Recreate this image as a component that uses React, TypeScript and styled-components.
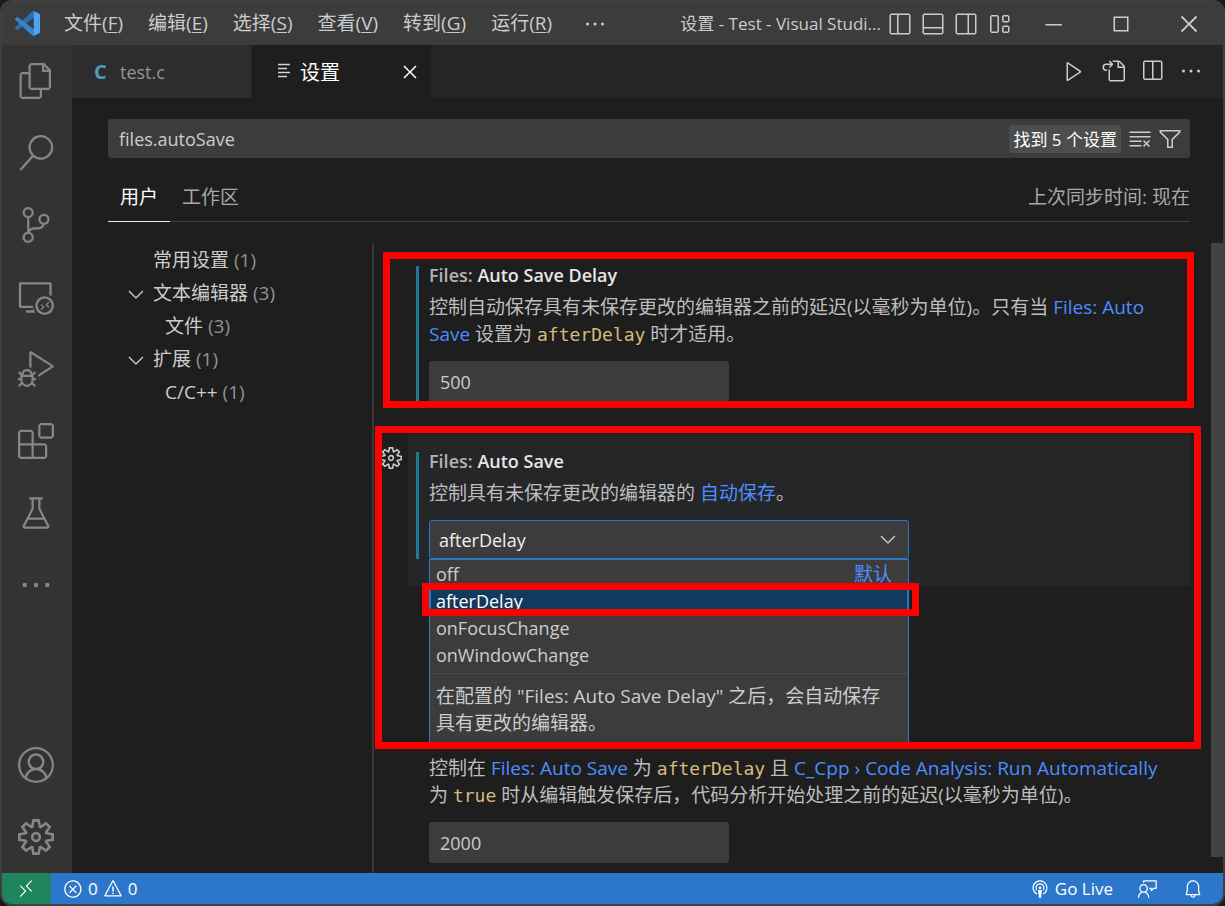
import React from 'react';
import styled, { createGlobalStyle } from 'styled-components';
import {
  VscAccount,
  VscBeaker,
  VscBell,
  VscBroadcast,
  VscChevronDown,
  VscChromeClose,
  VscChromeMaximize,
  VscChromeMinimize,
  VscClearAll,
  VscClose,
  VscDebugAlt,
  VscEllipsis,
  VscError,
  VscExtensions,
  VscFeedback,
  VscFiles,
  VscFilter,
  VscGoToFile,
  VscLayout,
  VscLayoutPanelOff,
  VscLayoutSidebarLeftOff,
  VscLayoutSidebarRightOff,
  VscPlay,
  VscRemote,
  VscRemoteExplorer,
  VscSearch,
  VscSettingsGear,
  VscSourceControl,
  VscSplitHorizontal,
  VscWarning,
} from 'react-icons/vsc';

const GlobalStyle = createGlobalStyle`
  *, *::before, *::after { box-sizing: border-box; }
  body {
    margin: 0;
    background: #1a1a1a;
    color: #cccccc;
    font-family: "Open Sans", "Noto Sans CJK SC", sans-serif;
    font-size: 19px;
    line-height: 27px;
  }
  button, input, select { font: inherit; color: inherit; border: 0; margin: 0; padding: 0; }
  button { background: none; display: flex; align-items: center; justify-content: center; }
  a { color: #4d8dff; text-decoration: none; }
  svg { flex: none; display: block; }
`;

const Window = styled.div`
  height: 100vh;
  min-height: 640px;
  display: flex;
  flex-direction: column;
  border: 2px solid #3f3f3f;
  border-radius: 12px;
  overflow: hidden;
  background: #1e1e1e;
`;

const TitleBar = styled.header`
  display: flex;
  align-items: center;
  height: 43px;
  flex: none;
  padding-left: 13px;
  background: #3c3c3c;
`;

const MenuBar = styled.nav`
  display: flex;
  align-items: center;
  gap: 1px;
  margin-left: 12px;
`;

const MenuButton = styled.button`
  height: 43px;
  padding: 0 12px;
  white-space: nowrap;
  u { text-underline-offset: 2px; }
`;

const WindowTitle = styled.div`
  flex: 1;
  min-width: 0;
  text-align: right;
  font-size: 17px;
  white-space: nowrap;
  overflow: hidden;
  text-overflow: ellipsis;
`;

const LayoutControls = styled.div`
  display: flex;
  gap: 9px;
  padding: 0 8px 0 7px;
`;

const IconButton = styled.button<{ $size?: number }>`
  width: ${(p) => p.$size ?? 24}px;
  height: ${(p) => p.$size ?? 24}px;
  flex: none;
`;

const WindowButton = styled.button`
  width: 68px;
  height: 43px;
`;

const Workbench = styled.div`
  flex: 1;
  min-height: 0;
  display: flex;
`;

const ActivityBar = styled.nav`
  width: 70px;
  flex: none;
  display: flex;
  flex-direction: column;
  justify-content: space-between;
  background: #333333;
  color: #868686;
`;

const ActivityButton = styled.button`
  width: 68px;
  height: 72px;
`;

const Main = styled.main`
  flex: 1;
  min-width: 0;
  display: flex;
  flex-direction: column;
`;

const TabStrip = styled.div`
  display: flex;
  height: 53px;
  flex: none;
  background: #252526;
`;

const Tab = styled.div<{ $active?: boolean }>`
  display: flex;
  align-items: center;
  width: 180px;
  padding: 0 9px 0 22px;
  border-right: 1px solid #252526;
  background: ${(p) => (p.$active ? '#1e1e1e' : '#2d2d2d')};
  color: ${(p) => (p.$active ? '#ffffff' : '#949494')};
  font-size: ${(p) => (p.$active ? 20 : 18)}px;
`;

const LanguageMark = styled.span`
  width: 26px;
  color: #519aba;
  font-weight: 700;
  font-size: 20px;
`;

const TabLabel = styled.span`
  flex: 1;
  padding-top: 1px;
`;

const SettingsMark = styled.svg`
  margin: 0 8px 3px 2px;
  width: 16px;
  height: 16px;
`;

const EditorActions = styled.div`
  margin-left: auto;
  display: flex;
  align-items: center;
  gap: 15px;
  padding: 0 20px 2px 0;
`;

const SettingsEditor = styled.section`
  flex: 1;
  min-height: 0;
  display: flex;
  flex-direction: column;
  padding: 21px 0 0 36px;
`;

const SearchBox = styled.div`
  display: flex;
  align-items: center;
  height: 39px;
  flex: none;
  margin-right: 33px;
  padding-right: 8px;
  border-radius: 3px;
  background: #3c3c3c;
`;

const SearchInput = styled.input`
  flex: 1;
  min-width: 0;
  padding: 0 11px;
  height: 39px;
  background: none;
  font-size: 18px;
`;

const ResultBadge = styled.span`
  padding: 0 4px;
  margin-right: 7px;
  height: 28px;
  line-height: 29px;
  border-radius: 3px;
  background: #4d4d4d;
  color: #ffffff;
  font-size: 17px;
`;

const SearchActions = styled.div`
  display: flex;
  gap: 6px;
`;

const ScopeBar = styled.div`
  display: flex;
  align-items: stretch;
  height: 49px;
  flex: none;
  margin: 15px 33px 0 0;
  border-bottom: 1px solid #404040;
`;

const ScopeTab = styled.button<{ $active?: boolean }>`
  height: 49px;
  padding: 0 12px;
  color: ${(p) => (p.$active ? '#ffffff' : '#a8a8a8')};
  border-bottom: 1px solid ${(p) => (p.$active ? '#e7e7e7' : 'transparent')};
`;

const SyncTime = styled.span`
  margin-left: auto;
  align-self: center;
  color: #a8a8a8;
`;

const SettingsBody = styled.div`
  flex: 1;
  min-height: 0;
  display: flex;
  margin-top: 21px;
`;

const Toc = styled.ul`
  width: 266px;
  flex: none;
  margin: 0;
  padding: 1px 0 0;
  list-style: none;
  border-right: 2px solid #383838;
`;

const TocRow = styled.li<{ $level?: number }>`
  display: flex;
  align-items: center;
  height: 33px;
  padding-left: ${(p) => (p.$level === 2 ? 28 : 16)}px;
  color: #cccccc;
  white-space: pre;
`;

const TocTwistie = styled.span`
  width: 29px;
  flex: none;
`;

const TocCount = styled.span`
  color: #929292;
`;

const SettingsList = styled.div`
  flex: 1;
  min-width: 0;
  overflow: hidden;
  display: flex;
  flex-direction: column;
  gap: 5px;
  padding: 5px 21px 0 34px;
`;

const ScrollTrack = styled.div`
  width: 12px;
  flex: none;
  padding-bottom: 16px;
`;

const ScrollThumb = styled.div`
  height: 100%;
  background: #434343;
`;

const SettingItem = styled.article<{ $focused?: boolean }>`
  position: relative;
  flex: none;
  padding: 18px 8px 27px;
  background: ${(p) => (p.$focused ? '#252628' : 'transparent')};
`;

const SettingContents = styled.div<{ $modified?: boolean }>`
  border-left: 3px solid ${(p) => (p.$modified ? '#217a94' : 'transparent')};
  padding-left: 10px;
`;

const SettingTitle = styled.h3`
  margin: 0 0 10px;
  font-size: 18px;
  line-height: 18px;
  font-weight: 600;
  color: #e7e7e7;
`;

const Category = styled.span`
  color: #b4b4b4;
`;

const Description = styled.p`
  margin: 0 0 13px;
  white-space: nowrap;
  color: #bdbdbd;
  code {
    color: #d7ba7d;
    font-family: "DejaVu Sans Mono", monospace;
    font-size: 18px;
    line-height: 18px;
  }
`;

const SettingInput = styled.input`
  display: block;
  width: 300px;
  height: 41px;
  padding: 1px 11px 0;
  border-radius: 3px;
  background: #3c3c3c;
  color: #cccccc;
  font-size: 18px;
`;

const CoveredSetting = styled(SettingItem)`
  margin-top: 146px;
`;

const GearButton = styled(IconButton)`
  position: absolute;
  left: -29px;
  top: 12px;
`;

const SelectBox = styled.div`
  position: relative;
  width: 480px;
`;

const Select = styled.select`
  appearance: none;
  display: block;
  width: 100%;
  height: 39px;
  padding: 1px 10px 0 9px;
  border: 1px solid #2c77cb;
  border-radius: 3px;
  background: #3c3c3c;
  color: #f0f0f0;
  font-size: 18px;
`;

const SelectChevron = styled.span`
  position: absolute;
  right: 9px;
  top: 7px;
  pointer-events: none;
`;

const OptionPanel = styled.div`
  position: absolute;
  top: 39px;
  left: 0;
  right: 0;
  border: 1px solid #2c77cb;
  background: #3c3c3c;
`;

const OptionList = styled.ul`
  margin: 0;
  padding: 0 0 5px;
  list-style: none;
`;

const Option = styled.li<{ $selected?: boolean }>`
  display: flex;
  justify-content: space-between;
  height: 27px;
  padding: 0 15px 0 5px;
  border: 1px solid ${(p) => (p.$selected ? '#2c77cb' : 'transparent')};
  background: ${(p) => (p.$selected ? '#12395e' : 'transparent')};
  color: ${(p) => (p.$selected ? '#ffffff' : '#cccccc')};
  font-size: 18px;
`;

const DefaultTag = styled.span`
  color: #4d8dff;
  font-size: 19px;
`;

const OptionDetail = styled.p`
  margin: 0;
  padding: 9px 6px 6px;
  border-top: 1px solid #4a4a4a;
  color: #cccccc;
  white-space: nowrap;
`;

const Highlight = styled.div<{ $top: number; $left: number; $right: number; $height: number }>`
  position: absolute;
  z-index: 2;
  top: ${(p) => p.$top}px;
  left: ${(p) => p.$left}px;
  right: ${(p) => p.$right}px;
  height: ${(p) => p.$height}px;
  border: 7px solid #ff0000;
  pointer-events: none;
`;

const StatusBar = styled.footer`
  display: flex;
  align-items: center;
  height: 31px;
  flex: none;
  background: #2c77cb;
  color: #ffffff;
  font-size: 17px;
`;

const RemoteButton = styled.button`
  width: 49px;
  height: 31px;
  padding-right: 2px;
  background: #1f855d;
`;

const StatusButton = styled.button`
  height: 31px;
  gap: 5px;
  padding: 0 12px;
`;

const StatusRight = styled.div`
  display: flex;
  gap: 1px;
  margin-left: auto;
  padding-right: 8px;
`;

const Logo = () => (
  <svg width="25" height="25" viewBox="0 0 100 100" aria-label="Visual Studio Code">
    <path
      fill="#2a6fb0"
      d="M96.46 10.8 75.86.88A6.23 6.23 0 0 0 68.75 2.08L1.3 63.58a4.17 4.17 0 0 0 0 6.17l5.51 5a4.17 4.17 0 0 0 5.32.24L93.36 13.37A4.14 4.14 0 0 1 100 16.67v-.24a6.25 6.25 0 0 0-3.54-5.63Z"
    />
    <path
      fill="#3484cf"
      d="m96.46 89.2-20.6 9.92a6.23 6.23 0 0 1-7.11-1.2L1.3 36.42a4.17 4.17 0 0 1 0-6.17l5.51-5a4.17 4.17 0 0 1 5.32-.24l81.23 61.62A4.14 4.14 0 0 0 100 83.33v.24a6.25 6.25 0 0 1-3.54 5.63Z"
    />
    <path
      fill="#4ba5f2"
      d="M75.86 99.13a6.23 6.23 0 0 1-7.11-1.21c2.3 2.3 6.25.67 6.25-2.59V4.67c0-3.26-3.94-4.9-6.25-2.59A6.23 6.23 0 0 1 75.86.87l20.6 9.91A6.25 6.25 0 0 1 100 16.41v67.18c0 2.4-1.38 4.59-3.54 5.63l-20.6 9.91Z"
    />
  </svg>
);

const menus: [string, string][] = [
  ['文件', 'F'],
  ['编辑', 'E'],
  ['选择', 'S'],
  ['查看', 'V'],
  ['转到', 'G'],
  ['运行', 'R'],
];

const activities = [
  { label: '资源管理器', Icon: VscFiles },
  { label: '搜索', Icon: VscSearch },
  { label: '源代码管理', Icon: VscSourceControl },
  { label: '远程资源管理器', Icon: VscRemoteExplorer },
  { label: '运行和调试', Icon: VscDebugAlt },
  { label: '扩展', Icon: VscExtensions },
  { label: '测试', Icon: VscBeaker },
  { label: '其他视图', Icon: VscEllipsis },
];

const toc = [
  { label: '常用设置', count: 1, level: 1, open: false },
  { label: '文本编辑器', count: 3, level: 1, open: true },
  { label: '文件', count: 3, level: 2, open: false },
  { label: '扩展', count: 1, level: 1, open: true },
  { label: 'C/C++', count: 1, level: 2, open: false },
];

const options = ['off', 'afterDelay', 'onFocusChange', 'onWindowChange'];

export default function App() {
  return (
    <>
      <GlobalStyle />
      <Window>
        <TitleBar>
          <Logo />
          <MenuBar>
            {menus.map(([label, key]) => (
              <MenuButton key={key}>
                <span>
                  {label}(<u>{key}</u>)
                </span>
              </MenuButton>
            ))}
            <IconButton aria-label="更多菜单" $size={60}>
              <VscEllipsis size={24} />
            </IconButton>
          </MenuBar>
          <WindowTitle>设置 - Test - Visual Studi...</WindowTitle>
          <LayoutControls>
            <IconButton aria-label="切换主侧栏"><VscLayoutSidebarLeftOff size={24} /></IconButton>
            <IconButton aria-label="切换面板"><VscLayoutPanelOff size={24} /></IconButton>
            <IconButton aria-label="切换辅助侧栏"><VscLayoutSidebarRightOff size={24} /></IconButton>
            <IconButton aria-label="自定义布局"><VscLayout size={24} /></IconButton>
          </LayoutControls>
          <WindowButton aria-label="最小化"><VscChromeMinimize size={24} /></WindowButton>
          <WindowButton aria-label="最大化"><VscChromeMaximize size={24} /></WindowButton>
          <WindowButton aria-label="关闭"><VscChromeClose size={24} /></WindowButton>
        </TitleBar>

        <Workbench>
          <ActivityBar>
            <div>
              {activities.map(({ label, Icon }) => (
                <ActivityButton key={label} aria-label={label}>
                  <Icon size={36} />
                </ActivityButton>
              ))}
            </div>
            <div>
              <ActivityButton aria-label="帐户"><VscAccount size={36} /></ActivityButton>
              <ActivityButton aria-label="管理"><VscSettingsGear size={36} /></ActivityButton>
            </div>
          </ActivityBar>

          <Main>
            <TabStrip>
              <Tab>
                <LanguageMark>C</LanguageMark>
                <TabLabel>test.c</TabLabel>
              </Tab>
              <Tab $active>
                <SettingsMark viewBox="0 0 16 16" fill="none" stroke="#d4d4d4" strokeWidth="1.5">
                  <path d="M2 2.5h12M2 6.5h9M2 10.5h12M2 14.5h9" />
                </SettingsMark>
                <TabLabel>设置</TabLabel>
                <IconButton aria-label="关闭标签页"><VscClose size={24} /></IconButton>
              </Tab>
              <EditorActions>
                <IconButton aria-label="运行"><VscPlay size={24} /></IconButton>
                <IconButton aria-label="打开设置 (JSON)"><VscGoToFile size={24} /></IconButton>
                <IconButton aria-label="拆分编辑器"><VscSplitHorizontal size={24} /></IconButton>
                <IconButton aria-label="更多操作"><VscEllipsis size={24} /></IconButton>
              </EditorActions>
            </TabStrip>

            <SettingsEditor>
              <SearchBox>
                <SearchInput aria-label="搜索设置" defaultValue="files.autoSave" />
                <ResultBadge>找到 5 个设置</ResultBadge>
                <SearchActions>
                  <IconButton aria-label="清除搜索"><VscClearAll size={24} /></IconButton>
                  <IconButton aria-label="筛选设置"><VscFilter size={24} /></IconButton>
                </SearchActions>
              </SearchBox>

              <ScopeBar>
                <ScopeTab $active>用户</ScopeTab>
                <ScopeTab>工作区</ScopeTab>
                <SyncTime>上次同步时间: 现在</SyncTime>
              </ScopeBar>

              <SettingsBody>
                <Toc>
                  {toc.map((row, i) => (
                    <TocRow key={i} $level={row.level}>
                      <TocTwistie>{row.open && <VscChevronDown size={24} />}</TocTwistie>
                      {row.label} <TocCount>({row.count})</TocCount>
                    </TocRow>
                  ))}
                </Toc>

                <SettingsList>
                  <SettingItem>
                    <SettingContents $modified>
                      <SettingTitle><Category>Files:</Category> Auto Save Delay</SettingTitle>
                      <Description>
                        控制自动保存具有未保存更改的编辑器之前的延迟(以毫秒为单位)。只有当{' '}
                        <a href="#auto-save">Files: Auto<br />Save</a> 设置为 <code>afterDelay</code> 时才适用。
                      </Description>
                      <SettingInput aria-label="Auto Save Delay" defaultValue="500" />
                    </SettingContents>
                    <Highlight $top={4} $left={-25} $right={-4} $height={156} />
                  </SettingItem>

                  <SettingItem $focused id="auto-save">
                    <GearButton aria-label="更多设置操作"><VscSettingsGear size={22} /></GearButton>
                    <SettingContents $modified>
                      <SettingTitle><Category>Files:</Category> Auto Save</SettingTitle>
                      <Description>
                        控制具有未保存更改的编辑器的 <a href="#auto-save">自动保存</a>。
                      </Description>
                      <SelectBox>
                        <Select aria-label="Auto Save" defaultValue="afterDelay">
                          {options.map((name) => (
                            <option key={name}>{name}</option>
                          ))}
                        </Select>
                        <SelectChevron><VscChevronDown size={24} /></SelectChevron>
                        <OptionPanel>
                          <OptionList role="listbox" aria-label="Auto Save">
                            {options.map((name) => (
                              <Option
                                key={name}
                                role="option"
                                aria-selected={name === 'afterDelay'}
                                $selected={name === 'afterDelay'}
                              >
                                {name}
                                {name === 'off' && <DefaultTag>默认</DefaultTag>}
                              </Option>
                            ))}
                          </OptionList>
                          <OptionDetail>
                            在配置的 "Files: Auto Save Delay" 之后，会自动保存<br />
                            具有更改的编辑器。
                          </OptionDetail>
                        </OptionPanel>
                        <Highlight $top={63} $left={-7} $right={-10} $height={33} />
                      </SelectBox>
                    </SettingContents>
                    <Highlight $top={-8} $left={-33} $right={-11} $height={323} />
                  </SettingItem>

                  <CoveredSetting>
                    <SettingContents>
                      <Description>
                        控制在 <a href="#auto-save">Files: Auto Save</a> 为 <code>afterDelay</code> 且{' '}
                        <a href="#code-analysis">C_Cpp › Code Analysis: Run Automatically</a>
                        <br />为 <code>true</code> 时从编辑触发保存后，代码分析开始处理之前的延迟(以毫秒为单位)。
                      </Description>
                      <SettingInput aria-label="Code Analysis Update Delay" defaultValue="2000" />
                    </SettingContents>
                  </CoveredSetting>
                </SettingsList>

                <ScrollTrack><ScrollThumb /></ScrollTrack>
              </SettingsBody>
            </SettingsEditor>
          </Main>
        </Workbench>

        <StatusBar>
          <RemoteButton aria-label="打开远程窗口"><VscRemote size={20} /></RemoteButton>
          <StatusButton>
            <VscError size={20} />0<VscWarning size={20} />0
          </StatusButton>
          <StatusRight>
            <StatusButton><VscBroadcast size={20} />Go Live</StatusButton>
            <StatusButton aria-label="反馈"><VscFeedback size={20} /></StatusButton>
            <StatusButton aria-label="通知"><VscBell size={20} /></StatusButton>
          </StatusRight>
        </StatusBar>
      </Window>
    </>
  );
}
